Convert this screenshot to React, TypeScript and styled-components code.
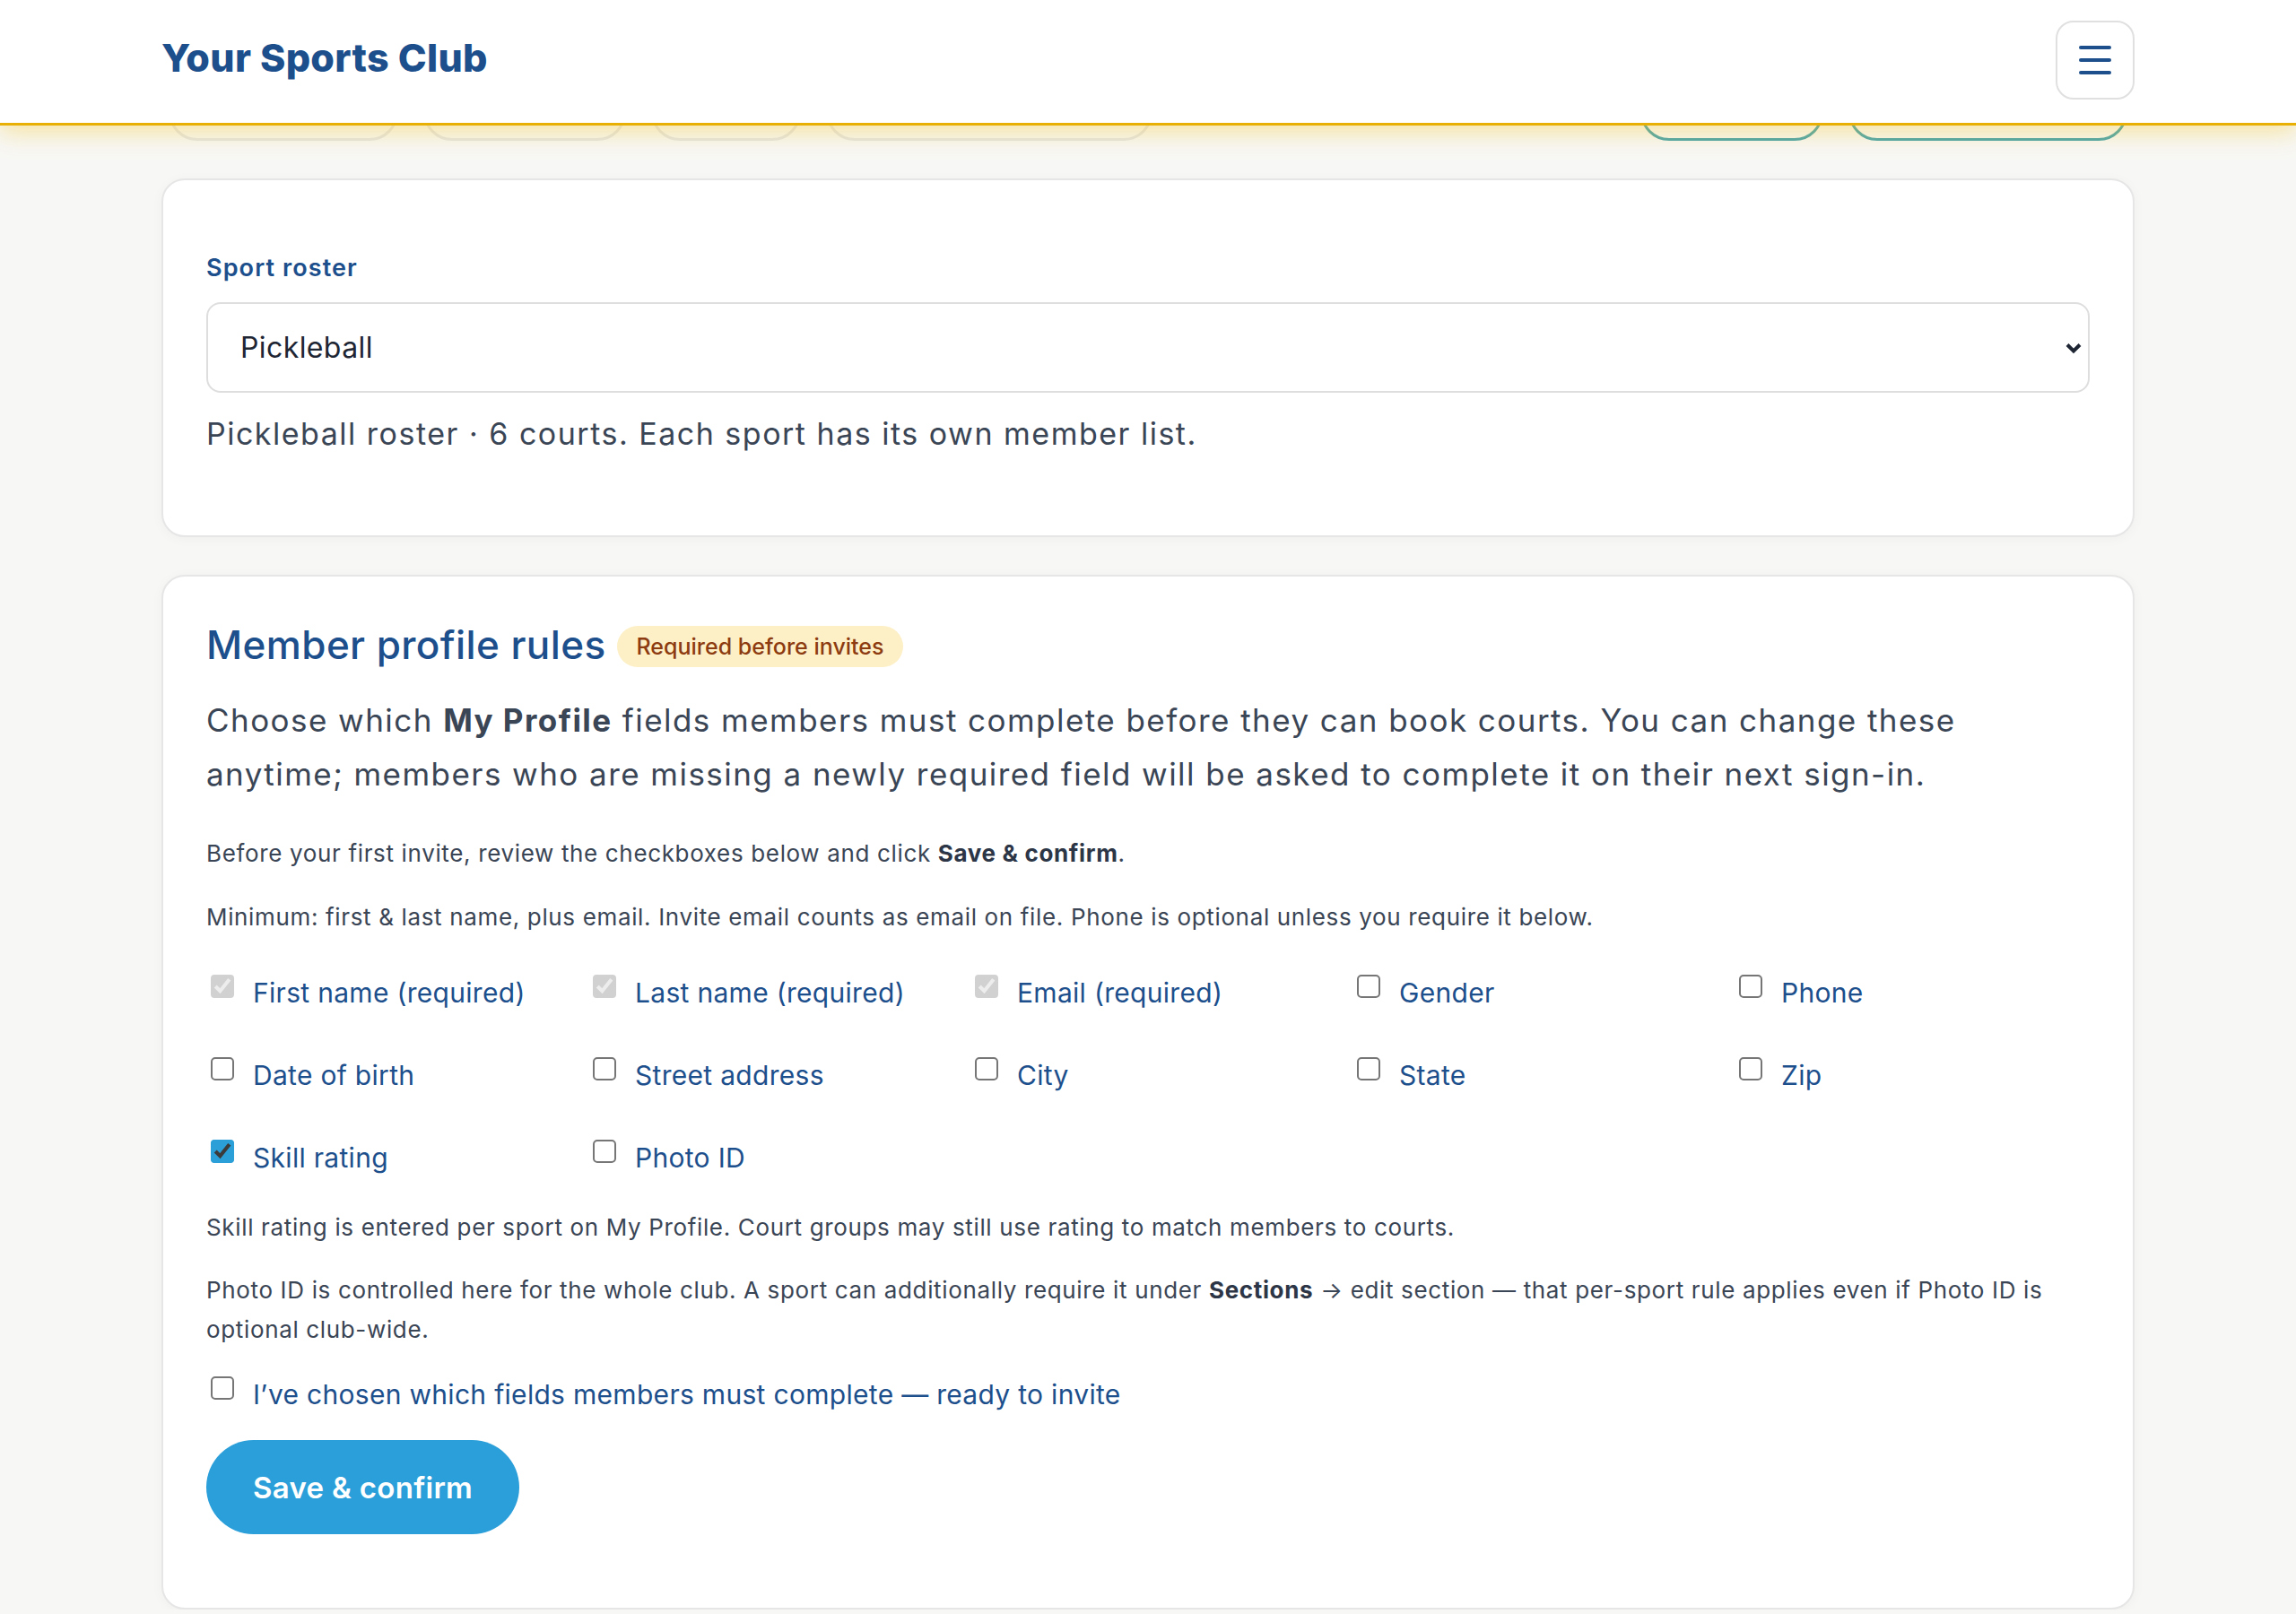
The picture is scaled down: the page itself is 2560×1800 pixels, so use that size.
import { useState } from 'react';
import { styled, createGlobalStyle } from 'styled-components';

const GlobalStyle = createGlobalStyle`
  * {
    box-sizing: border-box;
  }

  body {
    margin: 0;
    background: #f7f7f5;
    font-family: Inter, "Noto Sans", "Liberation Sans", sans-serif;
    color: #3a4555;
  }
`;

interface IProfileField {
  key: string;
  label: string;
  locked?: boolean;
}

const PROFILE_FIELDS: IProfileField[] = [
  { key: 'firstName', label: 'First name (required)', locked: true },
  { key: 'lastName', label: 'Last name (required)', locked: true },
  { key: 'email', label: 'Email (required)', locked: true },
  { key: 'gender', label: 'Gender' },
  { key: 'phone', label: 'Phone' },
  { key: 'dob', label: 'Date of birth' },
  { key: 'street', label: 'Street address' },
  { key: 'city', label: 'City' },
  { key: 'state', label: 'State' },
  { key: 'zip', label: 'Zip' },
  { key: 'skill', label: 'Skill rating' },
  { key: 'photoId', label: 'Photo ID' },
];

// nav pills that sit under the sticky header, only their bottoms show
const NAV_LEFT = [256, 226, 167, 364];
const NAV_RIGHT = [204, 311];

const App = () => {
  const [sport, setSport] = useState('pickleball');
  const [required, setRequired] = useState<Record<string, boolean>>({ skill: true });
  const [ready, setReady] = useState(false);

  const toggleField = (key: string) => {
    setRequired((prev) => ({ ...prev, [key]: !prev[key] }));
  };

  return (
    <>
      <GlobalStyle />
      <Header>
        <HeaderInner>
          <Logo>Your Sports Club</Logo>
          <MenuButton aria-label="Open menu">
            <MenuLine />
            <MenuLine />
            <MenuLine />
          </MenuButton>
        </HeaderInner>
      </Header>

      <TabStrip>
        <TabGroup>
          {NAV_LEFT.map((w, i) => (
            <Tab key={i} $width={w} />
          ))}
        </TabGroup>
        <TabGroup>
          {NAV_RIGHT.map((w, i) => (
            <Tab key={i} $width={w} $accent />
          ))}
        </TabGroup>
      </TabStrip>

      <Main>
        <Card $top={78} $bottom={86}>
          <FieldLabel htmlFor="sport">Sport roster</FieldLabel>
          <SelectWrap>
            <Select id="sport" value={sport} onChange={(e) => setSport(e.target.value)}>
              <option value="pickleball">Pickleball</option>
              <option value="tennis">Tennis</option>
              <option value="padel">Padel</option>
            </Select>
            <Chevron width="20" height="14" viewBox="0 0 20 14">
              <path d="M3 3.5 L10 10.5 L17 3.5" fill="none" stroke="#1e2533" strokeWidth="4" />
            </Chevron>
          </SelectWrap>
          <Helper>Pickleball roster · 6 courts. Each sport has its own member list.</Helper>
        </Card>

        <Card $top={48} $bottom={82}>
          <TitleRow>
            <Title>Member profile rules</Title>
            <Badge>Required before invites</Badge>
          </TitleRow>
          <Lead>
            Choose which <strong>My Profile</strong> fields members must complete before they can
            book courts. You can change these anytime; members who are missing a newly required
            field will be asked to complete it on their next sign-in.
          </Lead>
          <Note $gap={37}>
            Before your first invite, review the checkboxes below and click <strong>Save &amp; confirm</strong>.
          </Note>
          <Note $gap={27}>
            Minimum: first &amp; last name, plus email. Invite email counts as email on file. Phone is
            optional unless you require it below.
          </Note>

          <FieldGrid>
            {PROFILE_FIELDS.map((f) => (
              <CheckRow key={f.key}>
                <Check
                  type="checkbox"
                  checked={f.locked ? true : !!required[f.key]}
                  disabled={f.locked}
                  onChange={() => toggleField(f.key)}
                />
                <CheckText>{f.label}</CheckText>
              </CheckRow>
            ))}
          </FieldGrid>

          <Note $gap={34}>
            Skill rating is entered per sport on My Profile. Court groups may still use rating to match
            members to courts.
          </Note>
          <Note $gap={26}>
            Photo ID is controlled here for the whole club. A sport can additionally require it under{' '}
            <strong>Sections</strong> → edit section — that per-sport rule applies even if Photo ID is
            optional club-wide.
          </Note>

          <ConfirmRow>
            <Check type="checkbox" checked={ready} onChange={() => setReady(!ready)} />
            <CheckText>I’ve chosen which fields members must complete — ready to invite</CheckText>
          </ConfirmRow>

          <PrimaryButton type="button">Save &amp; confirm</PrimaryButton>
        </Card>
      </Main>
    </>
  );
};

const Header = styled.header`
  position: sticky;
  top: 0;
  z-index: 10;
  height: 140px;
  background: #fff;
  border-bottom: 3px solid #e8b005;
  box-shadow: 0 6px 26px rgba(246, 200, 40, 0.45);
`;

const HeaderInner = styled.div`
  max-width: 2200px;
  height: 100%;
  margin: 0 auto;
  display: flex;
  align-items: center;
  justify-content: space-between;
  padding-bottom: 10px;
`;

const Logo = styled.div`
  font-size: 43px;
  font-weight: 800;
  letter-spacing: 0.3px;
  color: #1c4f8c;
`;

const MenuButton = styled.button`
  width: 88px;
  height: 88px;
  margin-top: 6px;
  border: 2px solid #e0e0e0;
  border-radius: 20px;
  background: #fff;
  display: flex;
  flex-direction: column;
  align-items: center;
  justify-content: center;
  gap: 10px;
  cursor: pointer;
`;

const MenuLine = styled.span`
  width: 36px;
  height: 4px;
  border-radius: 2px;
  background: #1c4f8c;
`;

const TabStrip = styled.nav`
  max-width: 2200px;
  height: 17px;
  margin: 0 auto;
  padding: 0 8px;
  overflow: hidden;
  display: flex;
  align-items: flex-end;
  justify-content: space-between;
`;

const TabGroup = styled.div`
  display: flex;
  align-items: flex-end;
  gap: 28px;
`;

const Tab = styled.span<{ $width: number; $accent?: boolean }>`
  width: ${(p) => p.$width}px;
  height: 64px;
  border-radius: 32px;
  border: 3px solid ${(p) => (p.$accent ? '#4aa4ae' : '#e4e4e4')};
`;

const Main = styled.main`
  max-width: 2200px;
  margin: 42px auto 0;
  display: flex;
  flex-direction: column;
  gap: 42px;
`;

const Card = styled.section<{ $top: number; $bottom: number }>`
  background: #fff;
  border: 2px solid #e6e6e6;
  border-radius: 26px;
  padding: ${(p) => p.$top}px 48px ${(p) => p.$bottom}px;
  box-shadow: 0 2px 14px rgba(0, 0, 0, 0.035);
  display: flex;
  flex-direction: column;
  align-items: flex-start;
`;

const FieldLabel = styled.label`
  font-size: 27px;
  line-height: 40px;
  font-weight: 600;
  letter-spacing: 1.1px;
  color: #1c4f8c;
`;

const SelectWrap = styled.div`
  position: relative;
  width: 100%;
  margin-top: 18px;
`;

const Select = styled.select`
  appearance: none;
  width: 100%;
  height: 101px;
  padding: 0 60px 0 36px;
  border: 2px solid #dedede;
  border-radius: 16px;
  background: #fff;
  font-family: inherit;
  font-size: 32px;
  letter-spacing: 0.4px;
  color: #1e2533;
  cursor: pointer;
`;

const Chevron = styled.svg`
  position: absolute;
  right: 8px;
  top: 44px;
  pointer-events: none;
`;

const Helper = styled.p`
  margin: 19px 0 0;
  font-size: 34px;
  line-height: 54px;
  letter-spacing: 1.5px;
  color: #3a4555;
`;

const TitleRow = styled.div`
  display: flex;
  align-items: center;
  gap: 12px;
`;

const Title = styled.h2`
  margin: 0;
  font-size: 44px;
  line-height: 56px;
  font-weight: 500;
  letter-spacing: 0.4px;
  color: #1c4f8c;
`;

const Badge = styled.span`
  height: 46px;
  padding: 0 22px;
  margin-top: 4px;
  border-radius: 23px;
  background: #fdf0c6;
  color: #8d3b10;
  font-size: 25px;
  font-weight: 500;
  display: inline-flex;
  align-items: center;
`;

const Lead = styled.p`
  margin: 26px 0 0;
  font-size: 35px;
  line-height: 60px;
  letter-spacing: 1.45px;
  color: #3a4555;

  strong {
    font-weight: 700;
  }
`;

const Note = styled.p<{ $gap: number }>`
  margin: ${(p) => p.$gap}px 0 0;
  font-size: 26px;
  line-height: 44px;
  letter-spacing: 0.65px;
  color: #3a4555;

  strong {
    font-weight: 700;
    color: #2d3646;
  }
`;

const FieldGrid = styled.div`
  width: 100%;
  margin-top: 40px;
  display: grid;
  grid-template-columns: repeat(5, 1fr);
  column-gap: 30px;
  row-gap: 48px;
`;

const CheckRow = styled.label`
  display: flex;
  align-items: flex-start;
  gap: 21px;
  padding-left: 5px;
  cursor: pointer;
`;

const ConfirmRow = styled(CheckRow)`
  margin-top: 28px;
`;

const Check = styled.input`
  zoom: 2;
  width: 13px;
  height: 13px;
  margin: 1px 0 0;
  accent-color: #2a9fd8;
  flex: none;
  cursor: pointer;
`;

const CheckText = styled.span`
  font-size: 30px;
  line-height: 44px;
  letter-spacing: 0.3px;
  color: #1c4f8c;
`;

const PrimaryButton = styled.button`
  margin-top: 29px;
  height: 105px;
  padding: 0 52px;
  border: none;
  border-radius: 53px;
  background: #2b9fd9;
  color: #fff;
  font-family: inherit;
  font-size: 33px;
  font-weight: 600;
  letter-spacing: 0.3px;
  cursor: pointer;
`;

export default App;
